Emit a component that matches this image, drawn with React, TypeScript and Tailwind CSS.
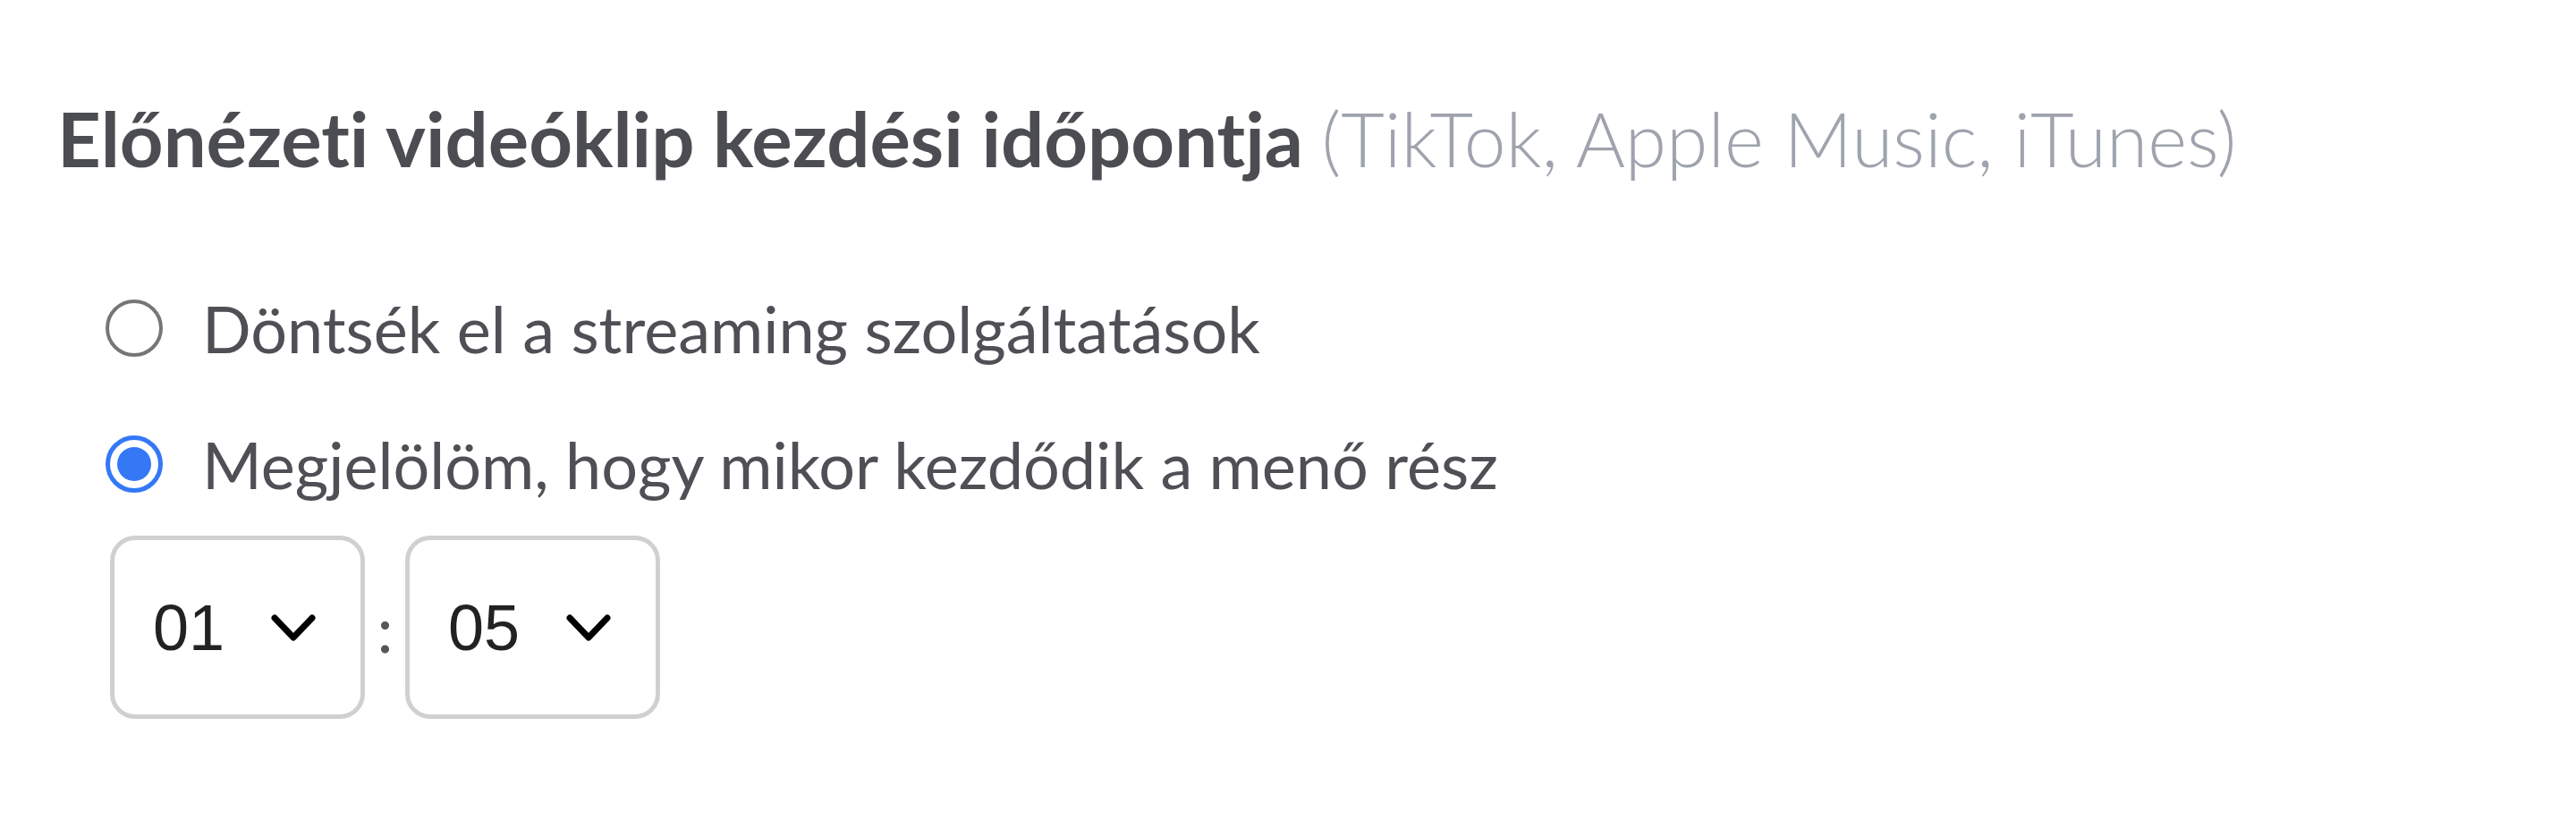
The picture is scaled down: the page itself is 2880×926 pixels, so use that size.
import React, { useState } from "react";

const lato = "font-['Lato',_'Noto_Sans',_sans-serif]";

type Option = { id: string; label: string };

const options: Option[] = [
  { id: "auto", label: "Döntsék el a streaming szolgáltatások" },
  { id: "manual", label: "Megjelölöm, hogy mikor kezdődik a menő rész" },
];

const Chevron: React.FC = () => (
  <svg width="50" height="30" viewBox="0 0 50 30" fill="none" className="shrink-0">
    <polyline
      points="4,4 25,26 46,4"
      stroke="#000"
      strokeWidth="7"
      strokeLinecap="round"
      strokeLinejoin="round"
    />
  </svg>
);

const Radio: React.FC<{ checked: boolean }> = ({ checked }) =>
  checked ? (
    <span className="w-[64px] h-[64px] shrink-0 rounded-full border-[5px] border-[#3478f6] flex items-center justify-center">
      <span className="w-[38px] h-[38px] rounded-full bg-[#3478f6]" />
    </span>
  ) : (
    <span className="w-[64px] h-[64px] shrink-0 rounded-full border-4 border-[#767676] bg-white" />
  );

const TimeSelect: React.FC<{ value: string }> = ({ value }) => (
  <div className="w-[285px] h-[205px] rounded-[28px] border-[5px] border-[#d0d0d0] bg-white flex items-center pl-[43px]">
    <span className="font-['Liberation_Sans',_Arial,_sans-serif] text-[72px] leading-none text-[#222]">
      {value}
    </span>
    <span className="ml-[52px]">
      <Chevron />
    </span>
  </div>
);

export default function App() {
  const [choice, setChoice] = useState("manual");

  return (
    <div className={`${lato} w-full h-[926px] bg-white pl-[64px] pt-[104px] [font-variant-ligatures:none]`}>
      <h2 className="text-[85px] leading-[100px] font-bold text-[#4c4d52] whitespace-nowrap">
        Előnézeti videóklip kezdési időpontja{" "}
        <span className="text-[84px] font-light text-[#9ea3ad]">(TikTok, Apple Music, iTunes)</span>
      </h2>

      <div className="pl-[54px] mt-[122px] flex flex-col gap-[72px]">
        {options.map((o) => (
          <label
            key={o.id}
            className="flex items-center gap-[44px] cursor-pointer"
            onClick={() => setChoice(o.id)}
          >
            <Radio checked={choice === o.id} />
            <span className="text-[72px] leading-[80px] text-[#4f5055] whitespace-nowrap">{o.label}</span>
          </label>
        ))}
      </div>

      <div className="pl-[59px] mt-[40px] flex items-center">
        <TimeSelect value="01" />
        <span className="w-[45px] text-center text-[72px] leading-none text-[#55565b]">:</span>
        <TimeSelect value="05" />
      </div>
    </div>
  );
}
